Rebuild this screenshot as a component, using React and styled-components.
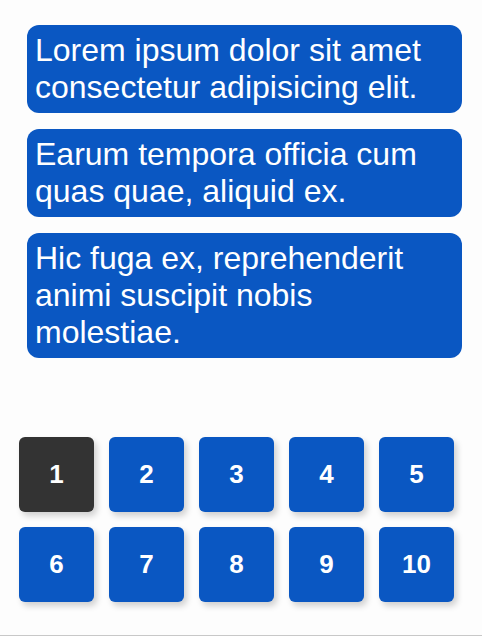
import React from 'react';
import styled, { createGlobalStyle } from 'styled-components';

const Global = createGlobalStyle`
  html, body {
    margin: 0;
    padding: 0;
    background: #fdfdfd;
    font-family: "Liberation Sans", Arial, sans-serif;
  }
`;

const Page = styled.div`
  height: 635px;
  border-bottom: 1px solid #c8c8c8;
  display: flex;
  flex-direction: column;
`;

const List = styled.div`
  display: flex;
  flex-direction: column;
  gap: 16px;
  padding: 25px 20px 0 27px;
`;

const Card = styled.div`
  background: #0a57c2;
  color: #fff;
  font-size: 32px;
  line-height: 37px;
  padding: 7px 8px;
  border-radius: 12px;
`;

const Grid = styled.div`
  display: grid;
  grid-template-columns: repeat(5, 75px);
  grid-auto-rows: 75px;
  gap: 15px;
  padding: 79px 0 0 19px;
`;

const Tile = styled.div`
  display: flex;
  align-items: center;
  justify-content: center;
  border-radius: 6px;
  background: ${p => (p.$active ? '#333333' : '#0a57c2')};
  color: #fff;
  font-weight: bold;
  font-size: 26px;
  box-shadow: 3px 4px 6px rgba(0, 0, 0, 0.18);
`;

const texts = [
  'Lorem ipsum dolor sit amet consectetur adipisicing elit.',
  'Earum tempora officia cum quas quae, aliquid ex.',
  'Hic fuga ex, reprehenderit animi suscipit nobis molestiae.',
];

export default function App() {
  return (
    <>
      <Global />
      <Page>
        <List>
          {texts.map(t => (
            <Card key={t}>{t}</Card>
          ))}
        </List>
        <Grid>
          {Array.from({ length: 10 }, (_, i) => (
            <Tile key={i} $active={i === 0}>
              {i + 1}
            </Tile>
          ))}
        </Grid>
      </Page>
    </>
  );
}
